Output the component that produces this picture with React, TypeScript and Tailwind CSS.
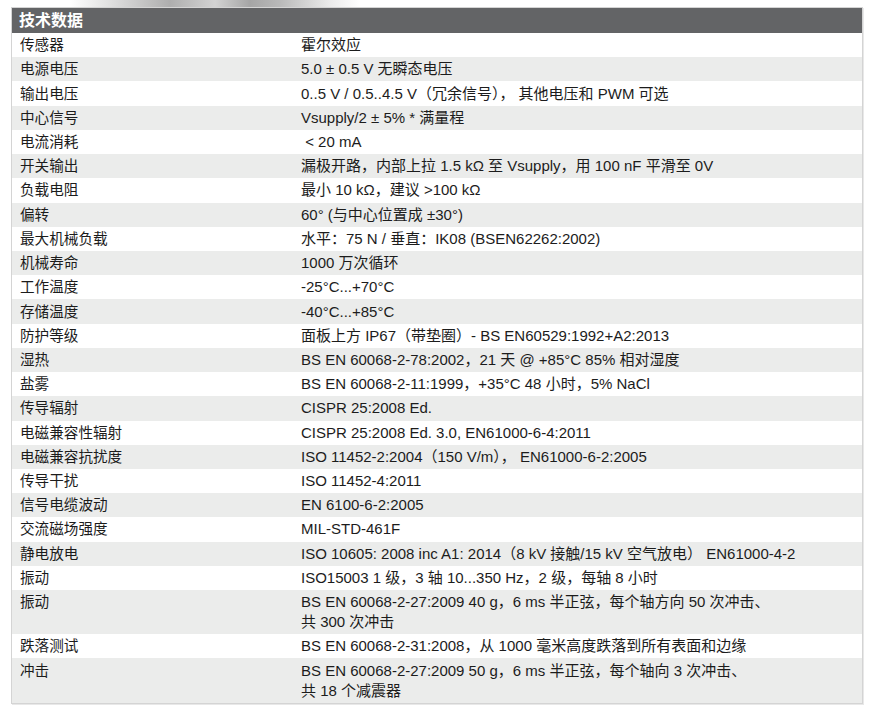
import React from 'react';

interface SpecRow {
  label: string;
  value: string[]; // one entry per line
}

const rows: SpecRow[] = [
  { label: '传感器', value: ['霍尔效应'] },
  { label: '电源电压', value: ['5.0 ± 0.5 V 无瞬态电压'] },
  { label: '输出电压', value: ['0..5 V / 0.5..4.5 V（冗余信号）， 其他电压和 PWM 可选'] },
  { label: '中心信号', value: ['Vsupply/2 ± 5% * 满量程'] },
  { label: '电流消耗', value: ['\u00a0< 20 mA'] },
  { label: '开关输出', value: ['漏极开路，内部上拉 1.5 kΩ 至 Vsupply，用 100 nF 平滑至 0V'] },
  { label: '负载电阻', value: ['最小 10 kΩ，建议 >100 kΩ'] },
  { label: '偏转', value: ['60° (与中心位置成 ±30°)'] },
  { label: '最大机械负载', value: ['水平：75 N / 垂直：IK08 (BSEN62262:2002)'] },
  { label: '机械寿命', value: ['1000 万次循环'] },
  { label: '工作温度', value: ['-25°C...+70°C'] },
  { label: '存储温度', value: ['-40°C...+85°C'] },
  { label: '防护等级', value: ['面板上方 IP67（带垫圈）- BS EN60529:1992+A2:2013'] },
  { label: '湿热', value: ['BS EN 60068-2-78:2002，21 天 @ +85°C 85% 相对湿度'] },
  { label: '盐雾', value: ['BS EN 60068-2-11:1999，+35°C 48 小时，5% NaCl'] },
  { label: '传导辐射', value: ['CISPR 25:2008 Ed.'] },
  { label: '电磁兼容性辐射', value: ['CISPR 25:2008 Ed. 3.0, EN61000-6-4:2011'] },
  { label: '电磁兼容抗扰度', value: ['ISO 11452-2:2004（150 V/m）， EN61000-6-2:2005'] },
  { label: '传导干扰', value: ['ISO 11452-4:2011'] },
  { label: '信号电缆波动', value: ['EN 6100-6-2:2005'] },
  { label: '交流磁场强度', value: ['MIL-STD-461F'] },
  { label: '静电放电', value: ['ISO 10605: 2008 inc A1: 2014（8 kV 接触/15 kV 空气放电） EN61000-4-2'] },
  { label: '振动', value: ['ISO15003 1 级，3 轴 10...350 Hz，2 级，每轴 8 小时'] },
  {
    label: '振动',
    value: ['BS EN 60068-2-27:2009 40 g，6 ms 半正弦，每个轴方向 50 次冲击、', '共 300 次冲击'],
  },
  { label: '跌落测试', value: ['BS EN 60068-2-31:2008，从 1000 毫米高度跌落到所有表面和边缘'] },
  {
    label: '冲击',
    value: ['BS EN 60068-2-27:2009 50 g，6 ms 半正弦，每个轴向 3 次冲击、', '共 18 个减震器'],
  },
];

export default function App() {
  return (
    <div
      className="w-[873px] h-[713px] bg-white overflow-hidden text-[#1c1c1c]"
      style={{ fontFamily: '"Liberation Sans", "Noto Sans CJK SC", sans-serif' }}
    >
      {/* blurred edge of the product photo above the table */}
      <div className="h-[7px] bg-[linear-gradient(to_right,transparent_70px,#d8d8d8_110px,#9a9a9a_170px,#c8c8c8_215px,#8f8f8f_250px,#a8a8a8_280px,#e6e6e6_330px,transparent_360px)] opacity-80" />

      <div className="ml-[11px] w-[852px] border border-[#d4d4d4] shadow-[1px_1px_0_#e8e8e8]">
        <div className="h-[25px] bg-[#636466] pl-[7px] flex items-center text-white font-bold text-[16px]">
          技术数据
        </div>

        {rows.map((row, i) => (
          <div
            key={i}
            className={`grid grid-cols-[281px_1fr] leading-[20px] py-[2.12px] ${
              i % 2 === 0 ? 'bg-white' : 'bg-[#ebeceb]'
            }`}
          >
            <div className="pl-[8px] text-[14.6px]">{row.label}</div>
            <div className="pl-[8px] text-[15px]">
              {row.value.map((line, j) => (
                <div key={j} className="whitespace-nowrap">
                  {line}
                </div>
              ))}
            </div>
          </div>
        ))}
      </div>
    </div>
  );
}
